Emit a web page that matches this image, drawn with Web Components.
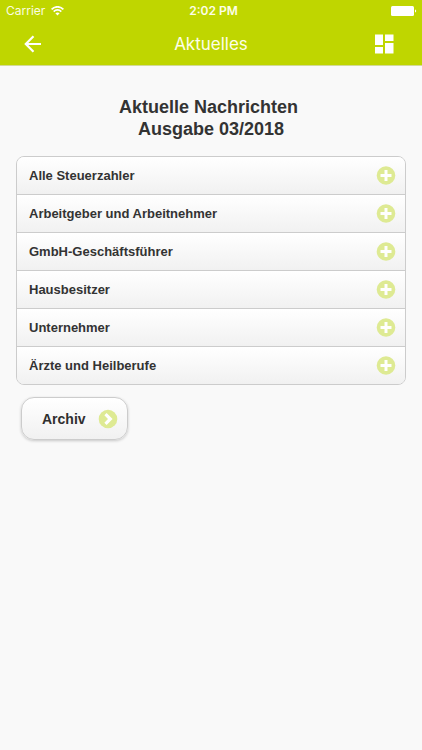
<!DOCTYPE html>
<html lang="de">
<head>
<meta charset="utf-8">
<meta name="viewport" content="width=device-width, initial-scale=1">
<title>Aktuelles</title>
<style>
  body {
    margin: 0;
    min-height: 100vh;
    background: #f9f9f9;
    color: #333;
    font-family: "Liberation Sans", Arial, sans-serif;
  }
</style>
</head>
<body>
<news-app></news-app>

<script>
const define = (name, html) => {
  const template = document.createElement('template');
  template.innerHTML = html;
  customElements.define(name, class extends HTMLElement {
    constructor() {
      super();
      this.attachShadow({ mode: 'open' }).append(template.content.cloneNode(true));
    }
  });
};

define('status-bar', `
  <style>
    :host { display: grid; grid-template-columns: 1fr auto 1fr; align-items: center; height: 22px;
      padding: 0 5px 0 6px; color: #fff; font: 12px/22px Inter, sans-serif; }
    .carrier { display: flex; align-items: center; gap: 6px; color: #fbfde0; }
    .time { padding-left: 4px; font-weight: 600; color: #fdfee8; }
    .battery { justify-self: end; }
    svg { display: block; }
  </style>
  <span class="carrier"><span>Carrier</span>
    <svg width="13" height="10" viewBox="0 0 13 10" fill="none" stroke="#fff" stroke-width="1.7" aria-hidden="true">
      <path d="M.6 3.4C4-.1 9-.1 12.400 3.400M2.700 5.600c2.200-2.200 5.400-2.200 7.600 0"/>
      <path d="M4.400 7.200c1.200-1.100 3-1.100 4.200 0L6.500 9.400z" fill="#fff" stroke="none"/>
    </svg>
  </span>
  <span class="time">2:02 PM</span>
  <svg class="battery" width="26" height="10" viewBox="0 0 26 10" fill="#fff" aria-hidden="true">
    <rect x="0" y="0" width="23" height="10" rx="1.500"/>
    <path d="M24 3.500c1.600.3 1.600 2.700 0 3z"/>
  </svg>`);

define('title-bar', `
  <style>
    :host { display: grid; grid-template-columns: 1fr auto 1fr; align-items: center; height: 43px;
      padding: 0 24px 0 20px; color: #fdfee8; }
    h1 { margin: 0; padding-left: 4px; font: 400 17px/42px Inter, sans-serif; }
    button { display: block; padding: 0; border: 0; background: none; color: #fff; cursor: pointer; }
    .menu { justify-self: end; }
    svg { display: block; }
  </style>
  <button type="button" aria-label="Zurück">
    <svg width="26" height="26" viewBox="0 0 26 26" fill="none" stroke="currentColor" stroke-width="2.200">
      <path d="M21 13H6M13.500 5.300L5.800 13l7.700 7.700"/>
    </svg>
  </button>
  <h1><slot></slot></h1>
  <button class="menu" type="button" aria-label="Übersicht">
    <svg width="26" height="26" viewBox="0 0 26 26" fill="currentColor">
      <path d="M3 3.500h8V14H3zM13 3.500h8.500V10H13zM3 16h8v6.500H3zM13 12h8.500v10.500H13z"/>
    </svg>
  </button>`);

define('plus-badge', `
  <style>:host { display: block; flex: none; } svg { display: block; }</style>
  <svg width="20" height="20" viewBox="0 0 20 20" aria-hidden="true">
    <circle cx="10" cy="9.500" r="9.300" fill="#deea93"/>
    <path d="M10 4v11M4.500 9.500h11" fill="none" stroke="#fff" stroke-width="3"/>
  </svg>`);

define('arrow-badge', `
  <style>:host { display: block; flex: none; } svg { display: block; }</style>
  <svg width="20" height="20" viewBox="0 0 20 20" aria-hidden="true">
    <circle cx="10" cy="10" r="9.300" fill="#deea93"/>
    <path d="M7.500 5.200l4.800 4.800-4.800 4.800" fill="none" stroke="#fff" stroke-width="3.200"/>
  </svg>`);

define('topic-row', `
  <style>
    :host { display: block; border-top: 1px solid #ccc; }
    :host(:first-child) { border-top: 0; }
    button { display: flex; align-items: center; justify-content: space-between; box-sizing: border-box;
      width: 100%; height: 37px; padding: 0 9px 0 12px; border: 0; color: #333;
      background: linear-gradient(#fff, #f1f1f1); font: bold 13px/20px "Liberation Sans", Arial, sans-serif;
      text-align: left; cursor: pointer; }
  </style>
  <button type="button" aria-expanded="false"><span><slot></slot></span><plus-badge></plus-badge></button>`);

define('topic-list', `
  <style>
    :host { display: block; overflow: hidden; border: 1px solid #ccc; border-radius: 8px; }
  </style>
  <slot></slot>`);

define('archive-button', `
  <style>
    :host { display: block; }
    button { display: flex; align-items: center; gap: 12px; height: 43px; padding: 0 9px 0 20px;
      border: 1px solid #ccc; border-radius: 13px; color: #2f2f2f; background: linear-gradient(#fff, #f1f1f1);
      box-shadow: 0 1px 3px rgba(0, 0, 0, .2); font: bold 14px/20px "Liberation Sans", Arial, sans-serif; cursor: pointer; }
  </style>
  <button type="button"><span><slot></slot></span><arrow-badge></arrow-badge></button>`);

define('news-app', `
  <style>
    :host { display: block; }
    header { background: #bfd600; border-bottom: 1px solid #d2da96; }
    main { padding: 30px 16px; }
    h2 { margin: 0 0 16px; text-align: center; font-size: 18px; line-height: 22px; }
    h2 span { display: block; }
    .first { padding-right: 5px; }
    archive-button { margin: 12px 0 0 5px; }
  </style>
  <header>
    <status-bar></status-bar>
    <title-bar>Aktuelles</title-bar>
  </header>
  <main>
    <h2><span class="first">Aktuelle Nachrichten</span><span>Ausgabe 03/2018</span></h2>
    <topic-list>
      <topic-row>Alle Steuerzahler</topic-row>
      <topic-row>Arbeitgeber und Arbeitnehmer</topic-row>
      <topic-row>GmbH-Geschäftsführer</topic-row>
      <topic-row>Hausbesitzer</topic-row>
      <topic-row>Unternehmer</topic-row>
      <topic-row>Ärzte und Heilberufe</topic-row>
    </topic-list>
    <archive-button>Archiv</archive-button>
  </main>`);
</script>
</body>
</html>
